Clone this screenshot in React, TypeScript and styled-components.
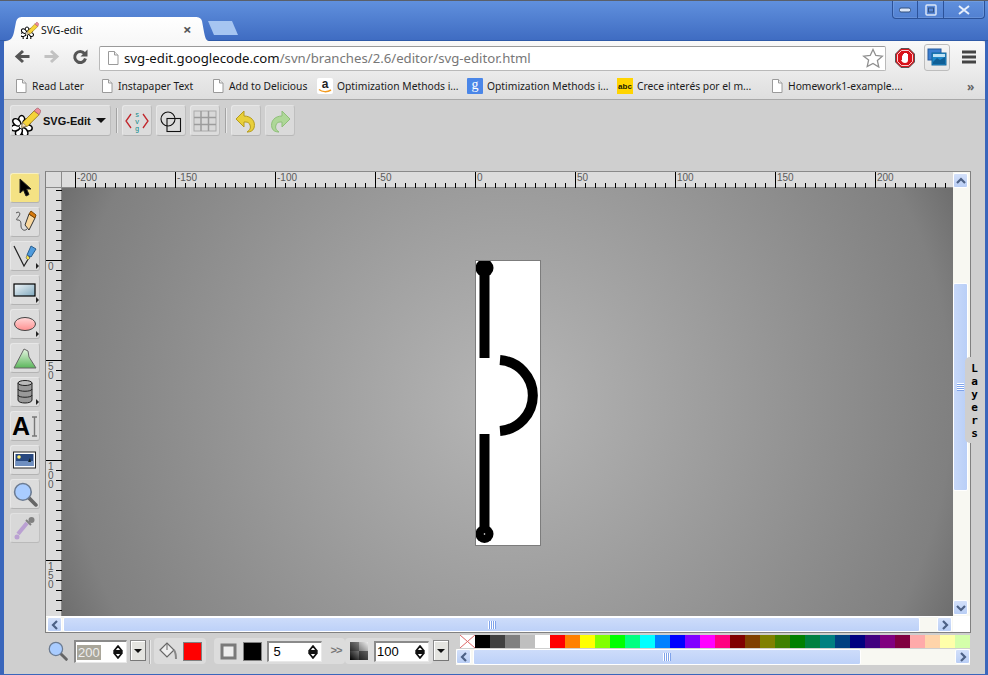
import React from "react";
import styled, { createGlobalStyle } from "styled-components";

const GlobalStyle = createGlobalStyle`
  html, body { margin: 0; padding: 0; background: #3f6dc4; }
  * { box-sizing: border-box; }
`;

const uiFont = `"Noto Sans", "Liberation Sans", sans-serif`;

const Win = styled.div`
  width: 988px;
  height: 675px;
  overflow: hidden;
  display: flex;
  flex-direction: column;
  background: #3a66bb;
  border-top: 1px solid #5a5f68;
  font-family: ${uiFont};
`;

const TitleBar = styled.div`
  position: relative;
  height: 40px;
  flex: none;
  background: linear-gradient(#6090dd, #3f6cc2);
  border-bottom: 1px solid #2f5aa8;
  display: flex;
  align-items: flex-end;
  padding-left: 5px;
`;

const Tab = styled.div`
  width: 204px;
  height: 24px;
  margin-bottom: -1px;
  background: linear-gradient(#ffffff, #f8f8f8);
  clip-path: path("M0 24 C6 24 8 20 9 15 L11 5 C12 1 14 0 18 0 L190 0 C194 0 196 1 197 4 L199 15 C200 20 201 24 204 24 Z");
  display: flex;
  align-items: center;
  padding: 1px 0 0 16px;
  font-size: 10.4px;
  color: #111;
`;

const TabTitle = styled.span`
  margin-left: 2px;
  flex: 1;
`;

const TabClose = styled.span`
  width: 16px;
  margin-right: 10px;
  font-size: 15px;
  font-weight: 700;
  color: #555;
  line-height: 1;
`;

const NewTab = styled.div`
  width: 30px;
  height: 14px;
  margin: 0 0 5px -1px;
  background: #a6c5f1;
  clip-path: polygon(0 0, 24px 0, 30px 14px, 6px 14px);
`;

const WinControls = styled.div`
  position: absolute;
  top: 0;
  right: 3px;
  width: 93px;
  height: 18px;
  display: flex;
  border: 1px solid #2c5299;
  border-top: none;
  border-radius: 0 0 4px 4px;
  box-shadow: inset 0 0 0 1px rgba(160, 190, 235, 0.25);
`;

const WinControl = styled.div<{ $w: number }>`
  width: ${(p) => p.$w}px;
  display: flex;
  align-items: center;
  justify-content: center;
  border-right: 1px solid #2c5299;
  &:last-child { border-right: none; }
`;

const Content = styled.div`
  flex: 1;
  margin: 0 3px 1px 4px;
  background: #cfcfcf;
  display: flex;
  flex-direction: column;
  min-height: 0;
`;

const ChromeTop = styled.div`
  height: 59px;
  flex: none;
  background: linear-gradient(#f9f9f9, #dedede);
  border-bottom: 1px solid #a8a8a8;
  border-radius: 3px 3px 0 0;
`;

const NavRow = styled.div`
  height: 30px;
  display: flex;
  align-items: center;
`;

const NavBtn = styled.div<{ $ml: number }>`
  width: 17px;
  height: 17px;
  margin-left: ${(p) => p.$ml}px;
  display: flex;
`;

const Omnibox = styled.div`
  width: 787px;
  height: 25px;
  margin: 4px 0 0 10px;
  background: #fff;
  border: 1px solid #b9b9b9;
  border-top-color: #9a9a9a;
  border-radius: 2px;
  display: flex;
  align-items: center;
  padding-left: 6px;
  font-size: 13.2px;
  white-space: nowrap;
`;

const UrlHost = styled.span`
  color: #111;
  margin-left: 4px;
`;

const UrlPath = styled.span`
  color: #777;
  flex: 1;
`;

const ExtButton = styled.div`
  width: 26px;
  height: 27px;
  margin: 2px 0 0 9px;
  background: linear-gradient(#f6f6f6, #e6e6e6);
  border: 1px solid #bdbdbd;
  border-radius: 3px;
  display: flex;
  align-items: center;
  justify-content: center;
`;

const BookmarkRow = styled.div`
  height: 28px;
  display: flex;
  align-items: center;
  padding: 2px 0 0 10px;
  font-size: 10.3px;
  color: #1b1b1b;
`;

const Bookmark = styled.div<{ $w: number }>`
  width: ${(p) => p.$w}px;
  display: flex;
  align-items: center;
  gap: 4px;
  white-space: nowrap;
`;

const More = styled.span`
  margin-left: 53px;
  font-size: 12px;
  font-weight: 700;
  color: #666;
`;

const EditBar = styled.div`
  height: 36px;
  flex: none;
  display: flex;
  align-items: flex-end;
  padding-left: 6px;
`;

const ToolBtn = styled.div<{ $w?: number; $ml?: number; $dim?: boolean }>`
  width: ${(p) => p.$w ?? 30}px;
  height: 31px;
  margin-left: ${(p) => p.$ml ?? 4}px;
  background: #dcdcdc;
  border: 1px solid #e7e7e7;
  border-right-color: #bdbdbd;
  border-bottom-color: #b5b5b5;
  border-radius: 3px;
  display: flex;
  align-items: center;
  justify-content: center;
  flex: none;
  opacity: ${(p) => (p.$dim ? 0.85 : 1)};
`;

const LogoBtn = styled(ToolBtn)`
  justify-content: flex-start;
  padding-left: 1px;
  gap: 2px;
  font: 700 11px "Liberation Sans", Arial, sans-serif;
  color: #111;
`;

const Caret = styled.span`
  margin-left: 3px;
  border-left: 5px solid transparent;
  border-right: 5px solid transparent;
  border-top: 5px solid #111;
`;

const Sep = styled.div`
  width: 2px;
  height: 25px;
  margin: 0 0 3px 5px;
  background: #a3a3a3;
  border-right: 1px solid #e8e8e8;
  flex: none;
`;

const Main = styled.div`
  position: relative;
  height: 462px;
  margin-top: 35px;
  flex: none;
  display: flex;
  padding-left: 6px;
`;

const ToolColumn = styled.div`
  width: 30px;
  padding-top: 2px;
  display: flex;
  flex-direction: column;
  gap: 4px;
`;

const LeftTool = styled.div<{ $active?: boolean; $dim?: boolean }>`
  position: relative;
  width: 30px;
  height: 30px;
  background: ${(p) => (p.$active ? "#f4e284" : "#dcdcdc")};
  border: 1px solid ${(p) => (p.$active ? "#f8f0c0" : "#e7e7e7")};
  border-right-color: #bbb;
  border-bottom-color: #b3b3b3;
  border-radius: 3px;
  display: flex;
  align-items: center;
  justify-content: center;
  opacity: ${(p) => (p.$dim ? 0.75 : 1)};
`;

const Flyout = styled.span`
  position: absolute;
  right: 0;
  bottom: 1px;
  border-left: 3px solid #222;
  border-top: 3px solid transparent;
  border-bottom: 3px solid transparent;
`;

const Workspace = styled.div`
  width: 926px;
  margin-left: 5px;
  border-top: 1px solid #8a8a8a;
  border-left: 1px solid #808080;
  border-right: 1px solid #808080;
  border-bottom: 1px solid #808080;
  display: grid;
  grid-template-columns: 16px 891px 17px;
  grid-template-rows: 16px 428px 16px;
  background: #dcdcdc;
`;

const Corner = styled.div`
  background: #dcdcdc;
  border-right: 1px solid #8a8a8a;
  border-bottom: 1px solid #8a8a8a;
`;

const RulerSvg = styled.svg`
  display: block;
  background: #dcdcdc;
`;

const RulerText = styled.text`
  font: 10px "Liberation Sans", Arial, sans-serif;
  fill: #5a5a5a;
`;

const Canvas = styled.div`
  background: radial-gradient(circle 493px at 50% 50%, #b6b6b6 0%, #808080 90%, #6e6e6e 100%);
  display: flex;
  align-items: center;
  justify-content: center;
  padding-top: 2px;
`;

const Page = styled.div`
  width: 66px;
  height: 286px;
  background: #fff;
  border: 1px solid #7c7c7c;
`;

const Track = styled.div`
  background: #f8f8f2;
  display: flex;
`;

const VTrack = styled(Track)`
  grid-column: 3;
  grid-row: 1 / span 2;
  flex-direction: column;
  padding: 1px 2px 1px 0;
  align-items: center;
`;

const ScrollBtn = styled.div`
  width: 15px;
  height: 15px;
  flex: none;
  background: linear-gradient(#d3e0fa, #b9cef5);
  border: 1px solid #fff;
  border-radius: 2px;
  display: flex;
  align-items: center;
  justify-content: center;
`;

const Thumb = styled.div<{ $size: number; $before: number }>`
  width: ${(p) => p.$size}px;
  margin-left: ${(p) => p.$before}px;
  background: linear-gradient(#cddcfa, #bdd1f8);
  border: 1px solid #fff;
  border-radius: 2px;
  display: flex;
  align-items: center;
  justify-content: center;
  flex: none;
`;

const VThumb = styled.div<{ $size: number; $before: number }>`
  width: 15px;
  height: ${(p) => p.$size}px;
  margin-top: ${(p) => p.$before}px;
  background: linear-gradient(90deg, #c7d8f9, #b9cff7);
  border: 1px solid #fff;
  border-radius: 2px;
  display: flex;
  align-items: center;
  justify-content: center;
  flex: none;
`;

const Grip = styled.div`
  width: 8px;
  height: 8px;
  background: repeating-linear-gradient(90deg, #fff 0 1px, #7fa3ea 1px 2px);
`;

const VGrip = styled.div`
  width: 7px;
  height: 8px;
  background: repeating-linear-gradient(#fff 0 1px, #7fa3ea 1px 2px);
`;

const Spacer = styled.div`
  flex: 1;
`;

const ScrollCorner = styled.div`
  background: #fff;
`;

const Hbar = styled(Track)`
  grid-column: 1 / span 2;
  grid-row: 3;
  border-top: 1px solid #fff;
  padding-left: 1px;
  padding-right: 1px;
`;

const LayersTab = styled.div`
  position: absolute;
  top: 186px;
  left: 961px;
  width: 18px;
  height: 86px;
  background: #cfcfcf;
  border-radius: 5px 0 0 5px;
  font: 700 11px/13px "DejaVu Sans Mono", "Liberation Mono", monospace;
  color: #000;
  text-align: center;
  padding-top: 5px;
  padding-left: 1px;
  display: flex;
  flex-direction: column;
`;

const BottomBar = styled.div`
  position: relative;
  flex: 1;
  display: flex;
  align-items: flex-start;
  padding: 7px 0 0 44px;
  min-height: 0;
`;

const ZoomGlass = styled.div`
  width: 20px;
  height: 20px;
  margin: 1px 0 0 0;
`;

const SpinInput = styled.div<{ $ml: number; $w: number; $h?: number }>`
  width: ${(p) => p.$w}px;
  height: ${(p) => p.$h ?? 23}px;
  margin-left: ${(p) => p.$ml}px;
  background: #fff;
  border-top: 2px solid #8a8a8a;
  border-left: 2px solid #8a8a8a;
  border-right: 1px solid #e8e8e8;
  border-bottom: 1px solid #e8e8e8;
  display: flex;
  align-items: center;
  justify-content: space-between;
  padding: 0 3px 0 1px;
  font: 13px "Liberation Sans", Arial, sans-serif;
  color: #000;
  flex: none;
`;

const Selected = styled.span`
  background: #a9a69a;
  color: #eee;
  padding: 0 1px;
`;

const DropBtn = styled.div<{ $ml: number }>`
  width: 16px;
  height: 21px;
  margin-left: ${(p) => p.$ml}px;
  background: #e4e4e0;
  border: 1px solid #8c8c8c;
  border-right-color: #777;
  border-bottom-color: #777;
  box-shadow: inset 1px 1px 0 #fff;
  display: flex;
  align-items: center;
  justify-content: center;
  flex: none;
`;

const SmallCaret = styled.span`
  border-left: 4px solid transparent;
  border-right: 4px solid transparent;
  border-top: 4px solid #111;
`;

const BarSep = styled.div`
  width: 2px;
  height: 24px;
  margin-left: 3px;
  background: #a3a3a3;
  border-right: 1px solid #e8e8e8;
  flex: none;
`;

const Group = styled.div<{ $ml: number; $w: number }>`
  width: ${(p) => p.$w}px;
  height: 26px;
  margin: -2px 0 0 ${(p) => p.$ml}px;
  background: #dcdcdc;
  border-radius: 4px;
  display: flex;
  align-items: center;
  padding-left: 5px;
  flex: none;
`;

const Swatch = styled.div<{ $color: string; $ml: number }>`
  width: 19px;
  height: 19px;
  margin-left: ${(p) => p.$ml}px;
  background: ${(p) => p.$color};
  border: 1px solid #808080;
  flex: none;
`;

const ChevRight = styled.span`
  margin-left: 5px;
  font: 700 11px "Liberation Mono", monospace;
  color: #777;
  letter-spacing: -1px;
  width: 18px;
  text-align: center;
  flex: none;
`;

const PaletteBox = styled.div`
  position: absolute;
  left: 452px;
  top: 2px;
  width: 515px;
`;

const PaletteRow = styled.div`
  display: flex;
  height: 14px;
  padding-left: 4px;
`;

const PaletteCell = styled.div<{ $color: string }>`
  width: 15px;
  height: 13px;
  flex: none;
  background: ${(p) => p.$color};
`;

const PaletteNone = styled.svg`
  width: 15px;
  height: 13px;
  flex: none;
  display: block;
  background: #fff;
`;

const PaletteScroll = styled.div`
  display: flex;
  height: 16px;
  background: #f8f8f2;
  width: 514px;
`;

const colors = [
  "#000000", "#404040", "#808080", "#bfbfbf", "#ffffff", "#ff0000", "#ff8000", "#ffff00", "#80ff00",
  "#00ff00", "#00ff80", "#00ffff", "#0080ff", "#0000ff", "#8000ff", "#ff00ff", "#ff0080", "#800000",
  "#804000", "#808000", "#408000", "#008000", "#008040", "#008080", "#004080", "#000080", "#400080",
  "#800080", "#800040", "#ffaaaa", "#ffd4aa", "#ffffaa", "#d4ffaa",
];

const PageIcon = () => (
  <svg width="14" height="16" viewBox="0 0 14 16" style={{ flex: "none" }}>
    <path d="M2.500 1.500h6l3.500 3.500v9.500h-9.500z" fill="#fff" stroke="#9a9a9a" />
    <path d="M8.500 1.500v3.500h3.500" fill="#eee" stroke="#9a9a9a" />
  </svg>
);

const AmazonIcon = () => (
  <svg width="16" height="16" viewBox="0 0 16 16" style={{ flex: "none" }}>
    <rect width="16" height="16" rx="2" fill="#fff" />
    <text x="8" y="10" textAnchor="middle" fontFamily="Liberation Sans, sans-serif" fontWeight="700" fontSize="12" fill="#222">a</text>
    <path d="M2 11.500c3 2.500 8 3 12 .5" fill="none" stroke="#f29a1f" strokeWidth="1.500" />
  </svg>
);

const GoogleIcon = () => (
  <svg width="16" height="16" viewBox="0 0 16 16" style={{ flex: "none" }}>
    <rect width="16" height="16" rx="1" fill="#4a86e8" />
    <text x="8" y="11" textAnchor="middle" fontFamily="Liberation Serif, serif" fontSize="14" fill="#fff">g</text>
  </svg>
);

const AbcIcon = () => (
  <svg width="16" height="16" viewBox="0 0 16 16" style={{ flex: "none" }}>
    <rect width="16" height="16" fill="#ffd400" />
    <text x="8" y="11" textAnchor="middle" fontFamily="Liberation Sans, sans-serif" fontWeight="700" fontSize="8" fill="#221b00">abc</text>
  </svg>
);

const FlowerLogo = ({ size = 30 }: { size?: number }) => (
  <svg width={size} height={size} viewBox="0 0 30 30">
    <g stroke="#000" strokeWidth="1.600" fill="#fff">
      {[0, 51, 103, 154, 206, 257, 309].map((a) => (
        <ellipse key={a} cx="10" cy="14.500" rx="3.200" ry="4.600" transform={`rotate(${a} 10 21)`} />
      ))}
    </g>
    <circle cx="10" cy="21" r="2.200" fill="#fff" />
    <path d="M11 17 L23 5 L28 9 L16 21 L10 22z" fill="#f5d33a" stroke="#8a6a10" strokeWidth=".8" />
    <path d="M23 5l2-2c1-1 2-1 3 0l1 1c1 1 1 2 0 3l-1 2z" fill="#ef8d9a" stroke="#a0505a" strokeWidth=".7" />
    <path d="M11 17l-1 5 5-1z" fill="#f6dcb0" stroke="#555" strokeWidth=".5" />
  </svg>
);

function TopRuler() {
  const ticks: React.ReactNode[] = [];
  for (let x = 85; x < 953; x += 10) {
    if ((x - 75) % 100 !== 0) ticks.push(<path key={x} d={`M${x - 62 + 0.5} 11V16`} stroke="#000" />);
  }
  const labels = [-200, -150, -100, -50, 0, 50, 100, 150, 200];
  return (
    <RulerSvg width="891" height="16">
      <path d="M0 15.500H891" stroke="#8a8a8a" />
      {ticks}
      {labels.map((v, i) => (
        <g key={v}>
          <path d={`M${13 + i * 100 + 0.5} 0V16`} stroke="#000" />
          <RulerText x={13 + i * 100 + 2} y={9}>{v}</RulerText>
        </g>
      ))}
    </RulerSvg>
  );
}

function LeftRuler() {
  const ticks: React.ReactNode[] = [];
  for (let y = 190; y < 616; y += 10) {
    if ((y - 260) % 100 !== 0) ticks.push(<path key={y} d={`M10 ${y - 188 + 0.5}H16`} stroke="#000" />);
  }
  const labels = ["0", "50", "100", "150"];
  return (
    <RulerSvg width="16" height="428">
      <path d="M15.500 0V428" stroke="#8a8a8a" />
      {ticks}
      {labels.map((v, i) => (
        <g key={v}>
          <path d={`M0 ${72 + i * 100 + 0.5}H16`} stroke="#000" />
          <RulerText>
            {v.split("").map((c, j) => (
              <tspan key={j} x={2} y={82 + i * 100 + j * 9}>{c}</tspan>
            ))}
          </RulerText>
        </g>
      ))}
    </RulerSvg>
  );
}

const Chev = ({ dir }: { dir: "up" | "down" | "left" | "right" }) => {
  const d = { up: "M2 8l4-4 4 4", down: "M2 4l4 4 4-4", left: "M8 2l-4 4 4 4", right: "M4 2l4 4-4 4" }[dir];
  return (
    <svg width="12" height="12" viewBox="0 0 12 12">
      <path d={d} fill="none" stroke="#4d6185" strokeWidth="2.200" />
    </svg>
  );
};

const Spinner = () => (
  <svg width="10" height="14" viewBox="0 0 10 14">
    <path d="M5 1L9 6H1zM5 13L1 8h8z" fill="#fff" stroke="#111" strokeWidth="1.800" strokeLinejoin="round" />
  </svg>
);

const LensIcon = ({ size }: { size: number }) => (
  <svg width={size} height={size} viewBox="0 0 24 24">
    <path d="M15 15l7 7" stroke="#666" strokeWidth="3.500" strokeLinecap="round" />
    <circle cx="9.500" cy="9.500" r="8" fill="#a9ccff" stroke="#6b7b92" strokeWidth="1.500" />
  </svg>
);

export default function App() {
  return (
    <Win>
      <GlobalStyle />
      <TitleBar>
        <Tab>
          <FlowerLogo size={18} />
          <TabTitle>SVG-edit</TabTitle>
          <TabClose>×</TabClose>
        </Tab>
        <NewTab />
        <WinControls>
          <WinControl $w={25}>
            <svg width="12" height="6" viewBox="0 0 12 6"><rect x=".5" y="1" width="11" height="4" rx="1.500" fill="#dbe6f8" stroke="#33507f" /></svg>
          </WinControl>
          <WinControl $w={26}>
            <svg width="12" height="12" viewBox="0 0 12 12"><rect x="1" y="1" width="10" height="10" rx="1" fill="none" stroke="#dbe6f8" strokeWidth="1.500" /><rect x="3.500" y="4" width="5" height="4" fill="none" stroke="#33507f" /></svg>
          </WinControl>
          <WinControl $w={40}>
            <svg width="12" height="10" viewBox="0 0 12 10"><path d="M1 1l10 8M11 1L1 9" stroke="#e6eefb" strokeWidth="2" /></svg>
          </WinControl>
        </WinControls>
      </TitleBar>
      <Content>
        <ChromeTop>
          <NavRow>
            <NavBtn $ml={10}>
              <svg width="17" height="17" viewBox="0 0 17 17"><path d="M15.500 8.500H4M9 3L3 8.500 9 14" fill="none" stroke="#555" strokeWidth="3" /></svg>
            </NavBtn>
            <NavBtn $ml={12}>
              <svg width="17" height="17" viewBox="0 0 17 17"><path d="M1.500 8.500H13M8 3l6 5.500L8 14" fill="none" stroke="#c2c2c2" strokeWidth="3" /></svg>
            </NavBtn>
            <NavBtn $ml={12}>
              <svg width="17" height="17" viewBox="0 0 17 17"><path d="M13.500 10.500a5.500 5.500 0 1 1-1-5" fill="none" stroke="#555" strokeWidth="3" /><path d="M15.500 1.500v7h-7z" fill="#555" /></svg>
            </NavBtn>
            <Omnibox>
              <PageIcon />
              <UrlHost>svg-edit.googlecode.com</UrlHost>
              <UrlPath>/svn/branches/2.6/editor/svg-editor.html</UrlPath>
              <svg width="22" height="20" viewBox="0 0 22 20" style={{ marginRight: 1 }}>
                <path d="M11 1.500l2.800 6 6.500.7-4.900 4.400 1.400 6.400L11 15.400l-5.800 3.100 1.400-6.400L1.700 8.200l6.500-.7z" fill="#fff" stroke="#8f8f8f" strokeWidth="1.300" />
              </svg>
            </Omnibox>
            <svg width="20" height="20" viewBox="0 0 20 20" style={{ marginLeft: 9, marginTop: 3 }}>
              <path d="M6 .5h8L19.500 6v8L14 19.500H6L.5 14V6z" fill="#d8121a" stroke="#555" />
              <path d="M6.500 2.500h7l4 4v7l-4 4h-7l-4-4v-7z" fill="none" stroke="#fff" strokeWidth=".8" />
              <path d="M7 12V7.500h1V6h1v-1h3v1h1v6c0 2-1 3-3 3s-3-1-4-3z" fill="#fff" />
            </svg>
            <ExtButton>
              <svg width="20" height="20" viewBox="0 0 20 20">
                <rect x="1" y="2" width="13" height="11" fill="#3b7fd1" stroke="#245a9e" />
                <rect x="5" y="6" width="14" height="12" fill="#1e88c9" stroke="#14679b" />
                <path d="M6 15l4-4 3 2 5-3v7H6z" fill="#0f5f96" />
                <rect x="6" y="7" width="12" height="3" fill="#bfe3f5" />
              </svg>
            </ExtButton>
            <svg width="14" height="14" viewBox="0 0 14 14" style={{ marginLeft: 12, marginTop: 2 }}>
              <path d="M0 2h14M0 7h14M0 12h14" stroke="#444" strokeWidth="3" />
            </svg>
          </NavRow>
          <BookmarkRow>
            <Bookmark $w={86}><PageIcon />Read Later</Bookmark>
            <Bookmark $w={111}><PageIcon />Instapaper Text</Bookmark>
            <Bookmark $w={106}><PageIcon />Add to Delicious</Bookmark>
            <Bookmark $w={150}><AmazonIcon />Optimization Methods i...</Bookmark>
            <Bookmark $w={150}><GoogleIcon />Optimization Methods i...</Bookmark>
            <Bookmark $w={153}><AbcIcon />Crece interés por el m...</Bookmark>
            <Bookmark $w={144}><PageIcon />Homework1-example....</Bookmark>
            <More>»</More>
          </BookmarkRow>
        </ChromeTop>

        <EditBar>
          <LogoBtn $w={101} $ml={0}>
            <FlowerLogo size={29} />
            SVG-Edit
            <Caret />
          </LogoBtn>
          <Sep />
          <ToolBtn $ml={4}>
            <svg width="24" height="24" viewBox="0 0 24 24">
              <path d="M6 5L1 12l5 7M18 5l5 7-5 7" fill="none" stroke="#c1272d" strokeWidth="1.300" />
              <g fontFamily="Liberation Mono, monospace" fontSize="7" fill="#0a8a8a" textAnchor="middle">
                <text x="12" y="8">s</text>
                <text x="12" y="15">v</text>
                <text x="12" y="22">g</text>
              </g>
            </svg>
          </ToolBtn>
          <ToolBtn>
            <svg width="24" height="24" viewBox="0 0 24 24">
              <circle cx="9" cy="10" r="7" fill="none" stroke="#111" strokeWidth="1.100" />
              <rect x="8" y="9.500" width="13.500" height="13" fill="none" stroke="#111" strokeWidth="1.100" />
            </svg>
          </ToolBtn>
          <ToolBtn>
            <svg width="24" height="24" viewBox="0 0 24 24">
              <rect x="1" y="2" width="22" height="20" fill="#d8d8d8" stroke="#aaa" />
              <path d="M1 8.500h22M1 15.500h22M8 2v20M15.500 2v20" stroke="#9c9c9c" strokeWidth="1.500" />
            </svg>
          </ToolBtn>
          <Sep />
          <ToolBtn $ml={4}>
            <svg width="24" height="24" viewBox="0 0 24 24">
              <path d="M2 10L10 2V7C17 7 22 12 20 19C19 22 16 23 13 23C16 21 17 19 16 16C15 13 13 13 10 13V18Z" fill="#e8cf3a" stroke="#b59b1c" />
            </svg>
          </ToolBtn>
          <ToolBtn $dim>
            <svg width="24" height="24" viewBox="0 0 24 24">
              <path d="M22 10L14 2V7C7 7 2 12 4 19C5 22 8 23 11 23C8 21 7 19 8 16C9 13 11 13 14 13V18Z" fill="#a9d98f" stroke="#84bd6a" />
            </svg>
          </ToolBtn>
        </EditBar>

        <Main>
          <ToolColumn>
            <LeftTool $active>
              <svg width="18" height="20" viewBox="0 0 18 20"><path d="M4 1v14l3.500-3 2.500 6 3-1.500-2.500-5.500H15z" fill="#000" stroke="#222" /></svg>
            </LeftTool>
            <LeftTool>
              <svg width="26" height="26" viewBox="0 0 26 26">
                <path d="M4 4c3-2 5 0 3 3S3 11 6 11s3 3 3 6 3 6 6 3" fill="none" stroke="#555" />
                <path d="M13 16l4-11 6 4-6 12z" fill="#f9d79c" stroke="#333" />
                <path d="M17 5l2-3 5 4-1 3z" fill="#d97a0c" stroke="#7a4500" />
              </svg>
            </LeftTool>
            <LeftTool>
              <svg width="26" height="26" viewBox="0 0 26 26">
                <path d="M2 3l10 20L18 13" fill="none" stroke="#222" strokeWidth="1.200" />
                <path d="M15 12l4-9 5 3-5 8z" fill="#4f9bdd" stroke="#2b5f8e" />
                <path d="M15 12l3 3-2 2-2-2z" fill="#f4e24a" stroke="#555" strokeWidth=".6" />
              </svg>
              <Flyout />
            </LeftTool>
            <LeftTool>
              <svg width="24" height="16" viewBox="0 0 24 16">
                <defs><linearGradient id="rg" x2="1" y2="1"><stop offset="0" stopColor="#f2f7fa" /><stop offset="1" stopColor="#7fa8bd" /></linearGradient></defs>
                <rect x="1" y="2" width="21" height="12" fill="url(#rg)" stroke="#000" strokeWidth="1.200" />
              </svg>
              <Flyout />
            </LeftTool>
            <LeftTool>
              <svg width="24" height="16" viewBox="0 0 24 16">
                <defs><linearGradient id="eg" x2="0" y2="1"><stop offset="0" stopColor="#ffd9d9" /><stop offset="1" stopColor="#ff8f8f" /></linearGradient></defs>
                <ellipse cx="12" cy="8" rx="10.500" ry="6.500" fill="url(#eg)" stroke="#444" />
              </svg>
              <Flyout />
            </LeftTool>
            <LeftTool>
              <svg width="26" height="26" viewBox="0 0 26 26">
                <defs><linearGradient id="pg" x2="0" y2="1"><stop offset="0" stopColor="#e6f6e2" /><stop offset="1" stopColor="#5bb65b" /></linearGradient></defs>
                <path d="M2 23L12 4l4 2 1 6 7 11z" fill="url(#pg)" stroke="#666" />
              </svg>
            </LeftTool>
            <LeftTool>
              <svg width="20" height="26" viewBox="0 0 20 26">
                <path d="M3 4v17c0 4 14 4 14 0V4z" fill="#999" stroke="#222" />
                <ellipse cx="10" cy="4" rx="7" ry="2.500" fill="#bbb" stroke="#222" />
                <path d="M3 10c0 3 14 3 14 0M3 16c0 3 14 3 14 0" fill="none" stroke="#222" />
              </svg>
              <Flyout />
            </LeftTool>
            <LeftTool>
              <svg width="26" height="26" viewBox="0 0 26 26">
                <text x="0" y="22" fontFamily="Liberation Sans, Arial, sans-serif" fontWeight="700" fontSize="25" fill="#000">A</text>
                <path d="M20 4h5M20 23h5M22.500 4v19" stroke="#777" strokeWidth="1.400" />
              </svg>
            </LeftTool>
            <LeftTool>
              <svg width="24" height="20" viewBox="0 0 24 20">
                <rect x=".5" y="2" width="22" height="16" fill="#fff" stroke="#222" />
                <rect x="2.500" y="4" width="18" height="12" fill="#27477f" />
                <path d="M2.500 11h18v5h-18z" fill="#6f8fc0" />
                <circle cx="6" cy="7" r="1.800" fill="#ffef70" />
                <path d="M15 12l2-4 1 4z" fill="#122" />
              </svg>
            </LeftTool>
            <LeftTool>
              <LensIcon size={25} />
            </LeftTool>
            <LeftTool $dim>
              <svg width="24" height="26" viewBox="0 0 24 26">
                <path d="M14 8L5 19" stroke="#b391d4" strokeWidth="4" />
                <path d="M13 5l5 5" stroke="#666" strokeWidth="2" />
                <circle cx="18.500" cy="5" r="3" fill="#666" />
                <circle cx="4" cy="22" r="2.500" fill="#b391d4" />
              </svg>
            </LeftTool>
          </ToolColumn>

          <Workspace>
            <Corner />
            <TopRuler />
            <VTrack>
              <ScrollBtn><Chev dir="up" /></ScrollBtn>
              <VThumb $size={208} $before={95}><VGrip /></VThumb>
              <Spacer />
              <ScrollBtn><Chev dir="down" /></ScrollBtn>
            </VTrack>
            <LeftRuler />
            <Canvas>
              <Page>
                <svg width="64" height="284" viewBox="0 0 64 284" style={{ display: "block" }}>
                  <path d="M8.500 7V97M8.500 173V272" stroke="#000" strokeWidth="10" fill="none" />
                  <circle cx="8.500" cy="7" r="9" />
                  <circle cx="8.500" cy="273" r="9" />
                  <circle cx="8.500" cy="273" r=".8" fill="#fff" />
                  <path d="M24 99.100 A35.500 35.500 0 0 1 24 169.900" stroke="#000" strokeWidth="10" fill="none" />
                </svg>
              </Page>
            </Canvas>
            <Hbar>
              <ScrollBtn><Chev dir="left" /></ScrollBtn>
              <Thumb $size={857} $before={1}><Grip /></Thumb>
              <Spacer />
              <ScrollBtn><Chev dir="right" /></ScrollBtn>
            </Hbar>
            <ScrollCorner />
          </Workspace>

          <LayersTab>
            <span>L</span><span>a</span><span>y</span><span>e</span><span>r</span><span>s</span>
          </LayersTab>
        </Main>

        <BottomBar>
          <ZoomGlass><LensIcon size={20} /></ZoomGlass>
          <SpinInput $ml={6} $w={53}>
            <Selected>200</Selected>
            <Spinner />
          </SpinInput>
          <DropBtn $ml={3}><SmallCaret /></DropBtn>
          <BarSep />
          <Group $ml={3} $w={52}>
            <svg width="18" height="20" viewBox="0 0 18 20">
              <path d="M1 9l7-7 7 7-7 7z" fill="#eee" stroke="#666" strokeWidth="1.200" />
              <path d="M15 9c2 3 2 6 2 9" stroke="#888" strokeWidth="2" fill="none" />
              <path d="M8 2V9" stroke="#666" />
            </svg>
            <Swatch $color="#ff0000" $ml={6} />
          </Group>
          <Group $ml={8} $w={131}>
            <svg width="17" height="17" viewBox="0 0 17 17" style={{ marginLeft: 1 }}>
              <rect x="2" y="2" width="13" height="13" fill="#eee" stroke="#7a7a7a" strokeWidth="3" />
            </svg>
            <Swatch $color="#000000" $ml={6} />
            <SpinInput $ml={5} $w={55} $h={21}>
              <span>&nbsp;5</span>
              <Spinner />
            </SpinInput>
            <ChevRight>&gt;&gt;</ChevRight>
          </Group>
          <Group $ml={0} $w={88}>
            <svg width="18" height="18" viewBox="0 0 18 18">
              <defs><linearGradient id="og" x1="0" y1="1" x2="1" y2="0"><stop offset="0" stopColor="#000" /><stop offset="1" stopColor="#eee" /></linearGradient></defs>
              <rect width="18" height="18" fill="url(#og)" />
              <rect x="9" y="9" width="9" height="9" fill="#000" opacity=".45" />
              <rect width="9" height="9" fill="#000" opacity=".3" />
            </svg>
            <SpinInput $ml={6} $w={55} $h={21}>
              <span>100</span>
              <Spinner />
            </SpinInput>
          </Group>
          <DropBtn $ml={0}><SmallCaret /></DropBtn>
          <PaletteBox>
            <PaletteRow>
              <PaletteNone viewBox="0 0 15 13"><path d="M0 0l15 13M15 0L0 13" stroke="#d66" /></PaletteNone>
              {colors.map((c, i) => (
                <PaletteCell key={i} $color={c} />
              ))}
            </PaletteRow>
            <PaletteScroll>
              <ScrollBtn><Chev dir="left" /></ScrollBtn>
              <Thumb $size={388} $before={2}><Grip /></Thumb>
              <Spacer />
              <ScrollBtn><Chev dir="right" /></ScrollBtn>
            </PaletteScroll>
          </PaletteBox>
        </BottomBar>
      </Content>
    </Win>
  );
}
